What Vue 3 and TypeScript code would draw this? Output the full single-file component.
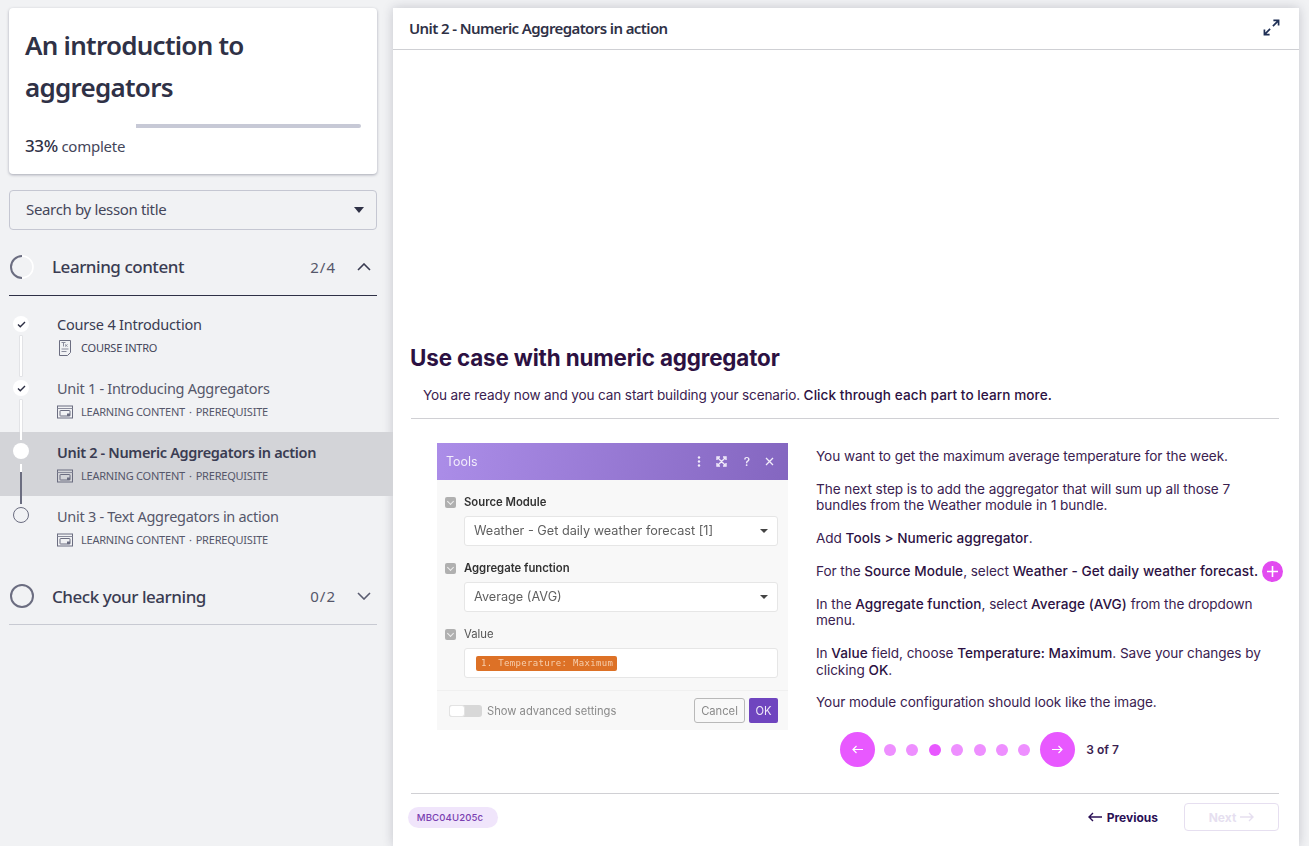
<script setup lang="ts">
interface Lesson { title: string; meta: string[]; state: 'done' | 'active' | 'todo'; icon: 'doc' | 'win' }
const lessons: Lesson[] = [
  { title: 'Course 4 Introduction', meta: ['COURSE INTRO'], state: 'done', icon: 'doc' },
  { title: 'Unit 1 - Introducing Aggregators', meta: ['LEARNING CONTENT', 'PREREQUISITE'], state: 'done', icon: 'win' },
  { title: 'Unit 2 - Numeric Aggregators in action', meta: ['LEARNING CONTENT', 'PREREQUISITE'], state: 'active', icon: 'win' },
  { title: 'Unit 3 - Text Aggregators in action', meta: ['LEARNING CONTENT', 'PREREQUISITE'], state: 'todo', icon: 'win' },
]
const dots = [1, 2, 3, 4, 5, 6, 7]
</script>

<template>
  <div class="page">
    <aside class="side">
      <section class="card">
        <h1>An introduction to aggregators</h1>
        <div class="bar"><div class="bar-fill"></div></div>
        <div class="pct"><b>33%</b> complete</div>
      </section>
      <div class="search">
        <span>Search by lesson title</span>
        <i class="caret"></i>
      </div>
      <div class="sec open">
        <svg class="ring" width="24" height="24" viewBox="0 0 24 24">
          <circle cx="12" cy="12" r="11" fill="none" stroke="#fff" stroke-width="1.6" />
          <path d="M12 1A11 11 0 0 0 12 23" fill="none" stroke="#6b6d80" stroke-width="2" />
        </svg>
        <span class="sec-title">Learning content</span>
        <span class="sec-count">2/4</span>
        <svg class="chev" width="14" height="8" viewBox="0 0 14 8"><path d="M1 7l6-6 6 6" fill="none" stroke="#3a3c52" stroke-width="1.6" /></svg>
      </div>
      <ul class="lessons">
        <li v-for="(l, i) in lessons" :key="l.title" class="lesson" :class="l.state">
          <div class="node">
            <svg v-if="l.state === 'done'" width="9" height="7" viewBox="0 0 10 8"><path d="M1 4l2.6 2.6L9 1.2" fill="none" stroke="#2b2d42" stroke-width="1.6" /></svg>
          </div>
          <div v-if="i < lessons.length - 1" class="link"></div>
          <div class="l-text">
            <div class="l-title">{{ l.title }}</div>
            <div class="l-meta">
              <svg v-if="l.icon === 'doc'" class="l-icon" width="16" height="18" viewBox="0 0 16 18">
                <path d="M2.5 1.5h11v12l-3 3h-8z" fill="none" stroke="#6b6d80" />
                <path d="M4.5 3.5h4M6.5 3.5v4M8 5.5l2.5 2M10.5 5.5L8 7.5M4.5 10h7M4.5 12.5h5" stroke="#8a8c9c" fill="none" />
              </svg>
              <svg v-else class="l-icon" width="16" height="14" viewBox="0 0 16 14">
                <rect x="0.5" y="1" width="15" height="12" fill="none" stroke="#6b6d80" />
                <path d="M0.5 3.5h15" stroke="#8a8c9c" />
                <rect x="3" y="5.5" width="10" height="5.5" rx="0.5" fill="none" stroke="#6b6d80" />
                <rect x="10" y="8.5" width="3" height="2.5" fill="#6b6d80" />
              </svg>
              <template v-for="(m, j) in l.meta" :key="m">
                <span v-if="j > 0" class="sep">·</span>
                <span>{{ m }}</span>
              </template>
            </div>
          </div>
        </li>
      </ul>
      <div class="sec closed">
        <svg class="ring" width="24" height="24" viewBox="0 0 24 24"><circle cx="12" cy="12" r="11" fill="none" stroke="#6b6d80" stroke-width="2" /></svg>
        <span class="sec-title">Check your learning</span>
        <span class="sec-count">0/2</span>
        <svg class="chev" width="14" height="8" viewBox="0 0 14 8"><path d="M1 1l6 6 6-6" fill="none" stroke="#5a5c70" stroke-width="1.6" /></svg>
      </div>
    </aside>

    <main class="main">
      <header class="m-head">
        <span>Unit 2 - Numeric Aggregators in action</span>
        <svg width="17" height="17" viewBox="0 0 18 18" fill="none" stroke="#1f2f55" stroke-width="1.8">
          <path d="M10.5 7.5L16.5 1.5M11 1.5h5.5V7M7.5 10.5l-6 6M7 16.5H1.5V11" />
        </svg>
      </header>
      <div class="content">
        <h2>Use case with numeric aggregator</h2>
        <p class="intro">You are ready now and you can start building your scenario. <strong>Click through each part to learn more.</strong></p>
        <div class="rule"></div>
        <div class="split">
          <div class="tools">
            <div class="t-head">
              <span>Tools</span>
              <div class="t-acts">
                <svg width="4" height="11" viewBox="0 0 4 11" fill="#f2edfb"><circle cx="2" cy="1.5" r="1.2" /><circle cx="2" cy="5.5" r="1.2" /><circle cx="2" cy="9.5" r="1.2" /></svg>
                <svg class="t-exp" width="11" height="11" viewBox="0 0 11 11" fill="none" stroke="#f2edfb" stroke-width="1.4"><path d="M1 4V1h3M7 1h3v3M10 7v3H7M4 10H1V7M2 2l7 7M9 2L2 9" /></svg>
                <span class="t-q">?</span>
                <svg width="9" height="9" viewBox="0 0 9 9" stroke="#f2edfb" stroke-width="1.3"><path d="M1 1l7 7M8 1L1 8" /></svg>
              </div>
            </div>
            <div class="t-body">
              <div class="t-group">
                <div class="t-label bold"><i class="t-check"></i>Source Module</div>
                <div class="t-input">Weather - Get daily weather forecast [1]<i class="t-caret"></i></div>
              </div>
              <div class="t-group">
                <div class="t-label bold"><i class="t-check"></i>Aggregate function</div>
                <div class="t-input">Average (AVG)<i class="t-caret"></i></div>
              </div>
              <div class="t-group">
                <div class="t-label"><i class="t-check"></i>Value</div>
                <div class="t-input"><span class="pill">1. Temperature: Maximum</span></div>
              </div>
            </div>
            <div class="t-foot">
              <div class="toggle"><i></i></div>
              <span class="t-adv">Show advanced settings</span>
              <span class="t-cancel">Cancel</span>
              <span class="t-ok">OK</span>
            </div>
          </div>
          <div class="copy">
            <p>You want to get the maximum average temperature for the week.</p>
            <p>The next step is to add the aggregator that will sum up all those 7 bundles from the Weather module in 1 bundle.</p>
            <p>Add <strong>Tools &gt; Numeric aggregator</strong>.</p>
            <p class="nowrap">For the <strong>Source Module</strong>, select <strong>Weather - Get daily weather forecast.</strong><span class="plus"><svg width="11" height="11" viewBox="0 0 11 11" stroke="#fff" stroke-width="1.6"><path d="M5.5 0v11M0 5.5h11" /></svg></span></p>
            <p>In the <strong>Aggregate function</strong>, select <strong>Average (AVG)</strong> from the dropdown menu.</p>
            <p>In <strong>Value</strong> field, choose <strong>Temperature: Maximum</strong>. Save your changes by clicking <strong>OK</strong>.</p>
            <p>Your module configuration should look like the image.</p>
          </div>
        </div>
        <div class="pager">
          <span class="round"><svg width="11" height="9" viewBox="0 0 11 9" fill="none" stroke="#fff" stroke-width="1.2"><path d="M11 4.5H1M4.5 1L1 4.5 4.5 8" /></svg></span>
          <div class="dots"><i v-for="d in dots" :key="d" :class="{ on: d === 3 }"></i></div>
          <span class="round"><svg width="11" height="9" viewBox="0 0 11 9" fill="none" stroke="#fff" stroke-width="1.2"><path d="M0 4.5h10M6.5 1L10 4.5 6.5 8" /></svg></span>
          <span class="count">3 of 7</span>
        </div>
      </div>
      <footer class="m-foot">
        <span class="chip">MBC04U205c</span>
        <span class="prev">
          <svg width="14" height="10" viewBox="0 0 14 10" fill="none" stroke="#2a0f55" stroke-width="1.4"><path d="M14 5H1M5 1L1 5l4 4" /></svg>
          Previous
        </span>
        <span class="next">
          Next
          <svg width="14" height="10" viewBox="0 0 14 10" fill="none" stroke="#e6dff0" stroke-width="1.4"><path d="M0 5h13M9 1l4 4-4 4" /></svg>
        </span>
      </footer>
    </main>
  </div>
</template>

<style>
html, body { margin: 0; height: 100%; overflow: hidden; background: #f1f2f4; }
</style>

<style scoped>
* { box-sizing: border-box; }
.page { display: flex; width: 1309px; height: 846px; overflow: hidden; background: #f1f2f4; font-family: "Noto Sans", sans-serif; color: #2f3146; }
.side { width: 393px; flex: none; padding-top: 8px; }
.card { margin-left: 9px; width: 368px; height: 166px; background: #fff; border-radius: 4px; box-shadow: 0 1px 3px rgba(30, 32, 60, .35); padding: 16px; }
.card h1 { margin: 0; font-size: 26px; line-height: 42px; font-weight: 600; color: #2f3146; letter-spacing: -.74px; width: 300px; }
.bar { height: 4px; background: #c7c9d6; border-radius: 2px; margin-top: 16px; }
.bar-fill { width: 33%; height: 4px; background: #fff; }
.pct { margin-top: 7px; font-size: 15px; line-height: 22px; color: #44465a; letter-spacing: -.25px; }
.pct b { font-weight: 500; font-size: 17px; color: #2f3146; letter-spacing: -.4px; }
.search { margin: 16px 0 0 9px; width: 368px; height: 40px; border: 1px solid #c5c7d2; border-radius: 4px; display: flex; align-items: center; justify-content: space-between; padding: 0 12px 2px 16px; font-size: 15px; letter-spacing: -.34px; color: #44465a; }
.caret { width: 0; height: 0; border-left: 5px solid transparent; border-right: 5px solid transparent; border-top: 6px solid #2f3146; margin-top: 2px; }
.sec { display: flex; align-items: center; margin-left: 9px; width: 368px; }
.sec.open { height: 66px; border-bottom: 1px solid #2f3146; padding-bottom: 8px; padding-top: 16px; }
.sec.closed { height: 56px; margin-top: 9px; padding-bottom: 1px; border-bottom: 1px solid #c8cad2; }
.ring { flex: none; margin: 0 18px 0 1px; }
.sec-title { font-size: 17px; font-weight: 500; letter-spacing: -.47px; flex: 1; color: #3a3c52; }
.sec-count { font-size: 15px; letter-spacing: 1px; color: #55576a; margin-right: 21px; }
.chev { margin-right: 6px; }
.lessons { list-style: none; margin: 8px 0 0; padding: 0; }
.lesson { position: relative; height: 64px; padding: 9px 0 0 57px; color: #55576a; }
.lesson.active { background: #d3d4d8; color: #3a3c52; }
.node { position: absolute; left: 13px; top: 12px; width: 16px; height: 16px; border-radius: 50%; background: #fff; display: flex; align-items: center; justify-content: center; }
.lesson.active .node { top: 11px; }
.lesson.todo .node { background: transparent; border: 1px solid #6b6d80; top: 11px; }
.link { position: absolute; left: 20px; top: 32px; width: 2px; height: 40px; background: #fff; box-shadow: 0 0 0 .5px #d3d4d8; z-index: 1; }
.lesson.active .link { height: 8px; }
.lesson.active .link::after { content: ""; position: absolute; left: 0; top: 8px; width: 2px; height: 32px; background: #6b6d80; }
.l-title { font-size: 14.5px; line-height: 22px; letter-spacing: -.28px; }
.lesson:first-child .l-title { color: #3a3c52; letter-spacing: -.2px; }
.lesson.active .l-title { font-weight: 600; letter-spacing: -.34px; }
.l-meta { display: flex; align-items: center; margin-top: 4px; font-size: 11px; line-height: 18px; letter-spacing: -.22px; color: #55576a; }
.lesson:first-child .l-meta { color: #44465a; }
.l-icon { margin-right: 8px; }
.sep { margin: 0 4px; }

.main { width: 906px; margin-top: 8px; background: #fff; box-shadow: 0 0 10px rgba(40, 42, 70, .22); display: flex; flex-direction: column; font-family: Inter, sans-serif; }
.m-head { height: 42px; flex: none; border-bottom: 1px solid #cfd0d4; display: flex; align-items: center; justify-content: space-between; padding: 0 19px 2px 16px; font-family: "Noto Sans", sans-serif; font-size: 15px; font-weight: 600; letter-spacing: -.6px; color: #2f3146; }
.content { flex: 1; padding: 293px 20px 0 17px; color: #3a2150; }
h2 { margin: 0; font-size: 22.4px; line-height: 30px; font-weight: 700; color: #2c1142; letter-spacing: -.15px; }
.intro { margin: 12px 0 0 13px; font-size: 13.6px; line-height: 20px; letter-spacing: -.15px; }
.intro strong { font-weight: 500; color: #2c1142; letter-spacing: .06px; }
.rule { height: 1px; background: #d0d0d4; margin: 13px 0 0 1px; }
.split { display: flex; margin-top: 24px; padding-left: 27px; }
.tools { width: 351px; height: 287px; flex: none; background: #f8f8f8; filter: blur(.35px); color: #555; font-size: 13px; }
.t-head { height: 37px; background: linear-gradient(100deg, #ab8de8, #8466c0); color: #f2edfb; display: flex; align-items: center; justify-content: space-between; padding: 0 14px 0 9px; font-size: 12.4px; }
.t-acts { display: flex; align-items: center; gap: 15px; }
.t-exp { margin-right: 2px; }
.t-q { font-size: 12px; font-weight: 500; }
.t-body { padding: 14px 10px 0 8px; height: 210px; }
.t-group { margin-bottom: 14px; }
.t-label { display: flex; align-items: center; height: 16px; font-size: 11.3px; color: #555; }
.t-label.bold { font-weight: 600; color: #333; }
.t-check { position: relative; width: 11px; height: 11px; border-radius: 2px; background: #b0b0b0; margin-right: 8px; }
.t-check::after { content: ""; position: absolute; left: 3px; top: 2.5px; width: 4px; height: 4px; border-right: 1px solid #eee; border-bottom: 1px solid #eee; transform: rotate(45deg); }
.t-input { position: relative; margin: 6px 0 0 19px; height: 30px; background: #fff; border: 1px solid #e6e6e6; border-radius: 3px; display: flex; align-items: center; padding: 0 0 1px 9px; font-size: 12.7px; color: #5f5f5f; }
.t-caret { position: absolute; right: 9px; top: 12px; border-left: 4px solid transparent; border-right: 4px solid transparent; border-top: 4px solid #444; }
.pill { background: #dd7126; color: #f6cfae; border-radius: 2px; height: 15px; width: 141px; margin: 2px 0 0 2px; font: 9px/15px "DejaVu Sans Mono", monospace; letter-spacing: .33px; padding-left: 5px; white-space: nowrap; overflow: hidden; }
.t-foot { height: 40px; border-top: 1px solid #f0f0f0; display: flex; align-items: center; padding: 0 10px 0 12px; font-size: 11.2px; color: #8a8a8a; }
.toggle { width: 33px; height: 12px; border-radius: 3px; background: #d8d8d8; margin-right: 5px; }
.toggle i { display: block; width: 16px; height: 12px; background: #fff; border-radius: 3px; border: 1px solid #e3e3e3; }
.t-adv { flex: 1; padding-top: 1px; }
.t-cancel { width: 51px; height: 25px; border: 1px solid #b9b9b9; border-radius: 3px; display: flex; align-items: center; justify-content: center; margin-right: 4px; }
.t-ok { width: 29px; height: 25px; background: #6f45bf; color: #efe9f8; border-radius: 2px; display: flex; align-items: center; justify-content: center; }
.copy { margin-left: 28px; width: 446px; font-size: 13.6px; line-height: 16.8px; letter-spacing: -.07px; padding-top: 5px; }
.copy p { margin: 0 0 15.8px; }
.copy strong { font-weight: 500; color: #2c1142; letter-spacing: .05px; }
.nowrap { white-space: nowrap; }
.plus { display: inline-flex; align-items: center; justify-content: center; width: 21px; height: 21px; border-radius: 50%; background: #e24bf0; vertical-align: middle; margin: -3px 0 -2px 4px; }
.pager { display: flex; align-items: center; margin: 2px 0 0 430px; height: 35px; }
.round { width: 35px; height: 35px; border-radius: 50%; background: #e858ff; display: flex; align-items: center; justify-content: center; flex: none; }
.dots { display: flex; gap: 10.4px; padding: 0 10px 0 9px; }
.dots i { width: 12px; height: 12px; border-radius: 50%; background: #ee8fff; }
.dots i.on { background: #e858ff; }
.count { margin-left: 11px; font-size: 12px; font-weight: 600; color: #3a2150; }
.m-foot { height: 53px; margin: 0 20px 0 18px; border-top: 1px solid #d0d0d4; flex: none; display: flex; align-items: center; padding-bottom: 6px; }
.chip { width: 90px; height: 21px; margin-left: -3px; padding-right: 6px; border-radius: 11px; background: #f0e5fb; color: #7a3fb0; font-size: 9.6px; line-height: 21px; text-align: center; font-weight: 500; letter-spacing: .1px; }
.prev { margin-left: auto; display: flex; align-items: center; gap: 5px; font-size: 12px; font-weight: 700; color: #2a0f55; }
.next { margin-left: 26px; width: 95px; height: 28px; border: 1px solid #e6dff0; border-radius: 4px; display: flex; align-items: center; justify-content: center; gap: 4px; font-size: 12px; font-weight: 700; color: #e6dff0; }
</style>
